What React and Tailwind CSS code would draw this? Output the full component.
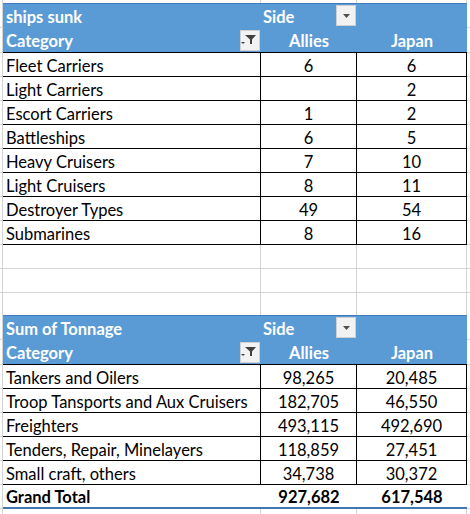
import React from "react";

const FONT = "font-['Lato','Liberation_Sans',sans-serif]";

function DropBtn() {
  return (
    <div className="absolute right-[1px] top-[1px] flex h-[21px] w-[20px] items-center justify-center border border-[#cfcfcf] bg-[#f2f2f2]">
      <svg width="7" height="4" viewBox="0 0 7 4">
        <polygon points="0,0 7,0 3.5,4" fill="#505050" />
      </svg>
    </div>
  );
}

function FilterBtn() {
  return (
    <div className="absolute right-[1px] top-[2px] h-[21px] w-[20px] border border-[#cfcfcf] bg-[#f2f2f2]">
      <svg width="18" height="19" viewBox="0 0 18 19" className="block">
        <polygon points="4,4 15,4 11,8.5 11,13 9,13 9,8.5" fill="#404040" />
        <polygon points="0,11 4,11 2,13" fill="#404040" />
      </svg>
    </div>
  );
}

function Top() {
  return (
    <div className="grid h-[3px] grid-cols-[3px_258px_96px_110px_3px]">
      <div className="border-r border-[#d4d4d4]" />
      <div className="border-r border-[#d4d4d4]" />
      <div className="border-r border-[#d4d4d4]" />
      <div className="border-r border-[#d4d4d4]" />
      <div />
    </div>
  );
}

function Header({ title }) {
  return (
    <>
      <div className="grid h-[25px] grid-cols-[3px_258px_96px_110px_3px]">
        <div className="border-r border-b border-[#d4d4d4]" />
        <div className="border-t border-[#3f7cbf] bg-[#5b9bd5] pl-[3px] pt-[3px] text-[16.5px] font-bold leading-[21px] text-white">
          {title}
        </div>
        <div className="relative border-t border-[#3f7cbf] bg-[#5b9bd5] pl-[2px] pt-[3px] text-[16.5px] font-bold leading-[21px] text-white">
          Side
          <DropBtn />
        </div>
        <div className="border-t border-[#3f7cbf] bg-[#5b9bd5]" />
        <div className="border-b border-[#d4d4d4]" />
      </div>
      <div className="grid h-[25px] grid-cols-[3px_258px_96px_110px_3px]">
        <div className="border-r border-b border-[#d4d4d4]" />
        <div className="relative border-b border-black bg-[#5b9bd5] pl-[3px] pt-[3px] text-[16.5px] font-bold leading-[21px] text-white">
          Category
          <FilterBtn />
        </div>
        <div className="border-b border-black bg-[#5b9bd5] pt-[3px] text-center text-[16.5px] font-bold leading-[21px] text-white">
          Allies
        </div>
        <div className="border-b border-black bg-[#5b9bd5] pt-[3px] text-center text-[16.5px] font-bold leading-[21px] text-white">
          Japan
        </div>
        <div className="border-b border-[#d4d4d4]" />
      </div>
    </>
  );
}

function DataRow({ label, a, b }) {
  return (
    <div className="grid h-[24px] grid-cols-[3px_258px_96px_110px_3px] text-[16.5px] leading-[19px] text-black">
      <div className="border-r border-b border-[#d4d4d4]" />
      <div className="overflow-hidden whitespace-nowrap border-r border-b border-black pl-[3px] pt-[4px]">{label}</div>
      <div className="border-r border-b border-black pt-[4px] text-center">{a}</div>
      <div className="border-r border-b border-black pt-[4px] text-center">{b}</div>
      <div className="border-b border-[#d4d4d4]" />
    </div>
  );
}

function EmptyRow({ last }) {
  const b = last ? "" : "border-b";
  return (
    <div className={`grid ${last ? "h-[22px]" : "h-[24px]"} grid-cols-[3px_258px_96px_110px_3px]`}>
      <div className={`border-r ${b} border-[#d4d4d4]`} />
      <div className={`border-r ${b} border-[#d4d4d4]`} />
      <div className={`border-r ${b} border-[#d4d4d4]`} />
      <div className={`border-r ${b} border-[#d4d4d4]`} />
      <div className={`${b} border-[#d4d4d4]`} />
    </div>
  );
}

function TotalRow() {
  return (
    <div className="grid h-[24px] grid-cols-[3px_258px_96px_110px_3px] text-[16.5px] font-bold leading-[19px] text-black">
      <div className="border-r border-b border-[#d4d4d4]" />
      <div className="border-b-2 border-[#4178b4] pl-[3px] pt-[3px]">Grand Total</div>
      <div className="border-b-2 border-[#4178b4] pt-[3px] text-center">927,682</div>
      <div className="border-b-2 border-[#4178b4] pt-[3px] text-center">617,548</div>
      <div className="border-b border-[#d4d4d4]" />
    </div>
  );
}

function Bottom() {
  return (
    <div className="grid h-[5px] grid-cols-[3px_258px_96px_110px_3px]">
      <div className="border-r border-[#d4d4d4]" />
      <div className="border-r border-[#d4d4d4]" />
      <div className="border-r border-[#d4d4d4]" />
      <div className="border-r border-[#d4d4d4]" />
      <div />
    </div>
  );
}

const ships = [
  ["Fleet Carriers", "6", "6"],
  ["Light Carriers", "", "2"],
  ["Escort Carriers", "1", "2"],
  ["Battleships", "6", "5"],
  ["Heavy Cruisers", "7", "10"],
  ["Light Cruisers", "8", "11"],
  ["Destroyer Types", "49", "54"],
  ["Submarines", "8", "16"],
];

const tonnage = [
  ["Tankers and Oilers", "98,265", "20,485"],
  ["Troop Tansports and Aux Cruisers", "182,705", "46,550"],
  ["Freighters", "493,115", "492,690"],
  ["Tenders, Repair, Minelayers", "118,859", "27,451"],
  ["Small craft, others", "34,738", "30,372"],
];

export default function App() {
  return (
    <div className={`h-[514px] w-[470px] overflow-hidden bg-white ${FONT}`}>
      <Top />
      <Header title="ships sunk" />
      {ships.map((r) => (
        <DataRow key={r[0]} label={r[0]} a={r[1]} b={r[2]} />
      ))}
      <EmptyRow />
      <EmptyRow />
      <EmptyRow last />
      <Header title="Sum of Tonnage" />
      {tonnage.map((r) => (
        <DataRow key={r[0]} label={r[0]} a={r[1]} b={r[2]} />
      ))}
      <TotalRow />
      <Bottom />
    </div>
  );
}
